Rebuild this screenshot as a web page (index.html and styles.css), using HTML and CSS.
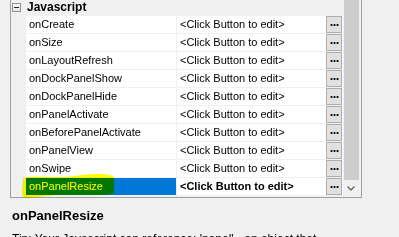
FILE: index.html
```html
<!DOCTYPE html>
<html>
<head>
<meta charset="utf-8">
<link rel="stylesheet" href="styles.css">
</head>
<body>
<div class="grid">
  <div class="table">
    <div class="cat"><span class="toggle"><span class="minus"></span></span><span class="cat-label">Javascript</span></div>
    <div class="row"><div class="gut"></div><div class="name">onCreate</div><div class="value"><span class="val">&lt;Click Button to edit&gt;</span><span class="dots"><i></i><i></i><i></i></span></div></div>
    <div class="row"><div class="gut"></div><div class="name">onSize</div><div class="value"><span class="val">&lt;Click Button to edit&gt;</span><span class="dots"><i></i><i></i><i></i></span></div></div>
    <div class="row"><div class="gut"></div><div class="name">onLayoutRefresh</div><div class="value"><span class="val">&lt;Click Button to edit&gt;</span><span class="dots"><i></i><i></i><i></i></span></div></div>
    <div class="row"><div class="gut"></div><div class="name">onDockPanelShow</div><div class="value"><span class="val">&lt;Click Button to edit&gt;</span><span class="dots"><i></i><i></i><i></i></span></div></div>
    <div class="row"><div class="gut"></div><div class="name">onDockPanelHide</div><div class="value"><span class="val">&lt;Click Button to edit&gt;</span><span class="dots"><i></i><i></i><i></i></span></div></div>
    <div class="row"><div class="gut"></div><div class="name">onPanelActivate</div><div class="value"><span class="val">&lt;Click Button to edit&gt;</span><span class="dots"><i></i><i></i><i></i></span></div></div>
    <div class="row"><div class="gut"></div><div class="name">onBeforePanelActivate</div><div class="value"><span class="val">&lt;Click Button to edit&gt;</span><span class="dots"><i></i><i></i><i></i></span></div></div>
    <div class="row"><div class="gut"></div><div class="name">onPanelView</div><div class="value"><span class="val">&lt;Click Button to edit&gt;</span><span class="dots"><i></i><i></i><i></i></span></div></div>
    <div class="row"><div class="gut"></div><div class="name">onSwipe</div><div class="value"><span class="val">&lt;Click Button to edit&gt;</span><span class="dots"><i></i><i></i><i></i></span></div></div>
    <div class="row selected"><div class="gut"></div><div class="name">onPanelResize</div><div class="value"><span class="val">&lt;Click Button to edit&gt;</span><span class="dots"><i></i><i></i><i></i></span></div>
      <svg class="marker" width="104" height="26" viewBox="0 0 104 26"><path d="M11 4 C 14 2, 30 3, 50 3 C 62 3, 68 0, 84 0 C 96 0, 102 1, 102 5 L 102 18 C 102 21, 94 21, 70 21 L 45 21 C 30 22, 20 24, 14 24 C 11 24, 10 22, 10 18 Z" fill="#ffff00"/></svg>
    </div>
  </div>
  <div class="scroll">
    <div class="thumb"></div>
    <div class="arrow"><svg width="8" height="5" viewBox="0 0 8 5"><path d="M0.5 0.5 L4 4 L7.5 0.5" fill="none" stroke="#606060" stroke-width="1.3"/></svg></div>
  </div>
</div>
<div class="desc">
  <div class="title">onPanelResize</div>
  <p class="tip">Tip: Your Javascript can reference: 'panel' - an object that</p>
</div>
</body>
</html>
```
FILE: styles.css
```css
html, body {
  margin: 0;
  padding: 0;
  background: #f0f0f0;
  font-family: "Liberation Sans", Arial, sans-serif;
  font-size: 11px;
  color: #000;
  overflow: hidden;
}
.grid {
  margin-left: 10px;
  width: 350px;
  height: 197px;
  border-left: 1px solid #a0a0a0;
  border-right: 1px solid #a0a0a0;
  border-bottom: 1px solid #a0a0a0;
  display: flex;
  background: #f0f0f0;
}
.table {
  width: 332px;
  display: flex;
  flex-direction: column;
}
.cat {
  height: 16px;
  display: flex;
  align-items: center;
  background: #f0f0f0;
}
.toggle {
  width: 7px;
  height: 7px;
  border: 1px solid #8e8f8f;
  background: linear-gradient(#ffffff, #e6e6e6);
  margin: -2px 0 0 1px;
  display: flex;
  align-items: center;
  justify-content: center;
}
.minus {
  width: 5px;
  height: 1px;
  background: #222;
}
.cat-label {
  margin-left: 6px;
  font-weight: bold;
  font-size: 12px;
  line-height: 16px;
  margin-top: -2px;
}
.row {
  display: flex;
  height: 17px;
  border-bottom: 1px solid #f0f0f0;
  position: relative;
}
.gut {
  width: 15px;
  background: #f0f0f0;
}
.name {
  width: 147px;
  padding-left: 3px;
  background: #fff;
  border-right: 1px solid #f0f0f0;
  line-height: 17px;
  white-space: nowrap;
}
.value {
  flex: 1;
  background: #fff;
  display: flex;
  align-items: flex-start;
  padding-left: 3px;
}
.val {
  flex: 1;
  line-height: 17px;
  white-space: nowrap;
}
.dots {
  width: 14px;
  height: 14px;
  margin-right: 1px;
  border: 1px solid #adadad;
  background: #e1e1e1;
  display: flex;
  align-items: center;
  justify-content: center;
  gap: 2px;
  padding-top: 1px;
  box-sizing: content-box;
}
.dots i {
  width: 1px;
  height: 2px;
  background: #000;
  box-shadow: -1px 0 0 #d08a3a, 1px 0 0 #4a9ad8;
}
.selected .name {
  background: #0078d7;
  color: #fff;
}
.selected .val {
  font-weight: bold;
}
.marker {
  position: absolute;
  left: 1px;
  top: -4px;
  mix-blend-mode: multiply;
  pointer-events: none;
}
.scroll {
  width: 18px;
  display: flex;
  flex-direction: column;
  background: #f0f0f0;
}
.thumb {
  margin-left: 1px;
  width: 15px;
  height: 180px;
  background: #cdcdcd;
}
.arrow {
  flex: 1;
  display: flex;
  align-items: center;
  justify-content: center;
  padding-right: 2px;
}
.desc {
  padding: 10px 0 0 12px;
}
.title {
  font-weight: bold;
  font-size: 13px;
  line-height: 16px;
}
.tip {
  margin: 8px 0 0;
  font-size: 12px;
  line-height: 15px;
  white-space: nowrap;
}
```
